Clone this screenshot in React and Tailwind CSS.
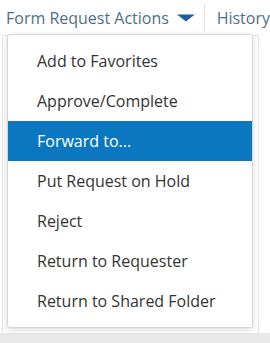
const items = [
  "Add to Favorites",
  "Approve/Complete",
  "Forward to...",
  "Put Request on Hold",
  "Reject",
  "Return to Requester",
  "Return to Shared Folder",
];

export default function App() {
  return (
    <div className="relative w-[270px] h-[343px] overflow-hidden bg-white font-['Open_Sans',sans-serif]">
      {/* top bar */}
      <div className="flex h-[35px] items-center pl-[6px] text-[16px] text-[#4f6f89] whitespace-nowrap">
        <span>Form Request Actions</span>
        <svg className="ml-[8px]" width="20" height="8" viewBox="0 0 20 8">
          <path d="M0 0 H20 L10 8 Z" fill="#1f5f99" />
        </svg>
        <div className="ml-[9px] h-[28px] border-l border-[#e2e2e2]" />
        <span className="pl-[12px]">History</span>
      </div>

      {/* page behind the menu */}
      <div className="ml-[2px] mr-[11px] h-[298px] border-l border-t border-r border-[#e6e6e6]" />
      <div className="h-[10px] bg-[#e9e9e9]" />

      {/* dropdown */}
      <div className="absolute left-[7px] top-[34px] w-[246px] rounded-[3px] border border-[#d6d6d6] bg-white py-[6px] shadow-[0_2px_6px_rgba(0,0,0,0.15)]">
        {items.map((item) => (
          <div
            key={item}
            className={
              item === "Forward to..."
                ? "flex h-[40px] items-center pl-[29px] text-[16px] text-white bg-[#0a77c0]"
                : "flex h-[40px] items-center pl-[29px] text-[16px] text-[#333]"
            }
          >
            {item}
          </div>
        ))}
      </div>
    </div>
  );
}
